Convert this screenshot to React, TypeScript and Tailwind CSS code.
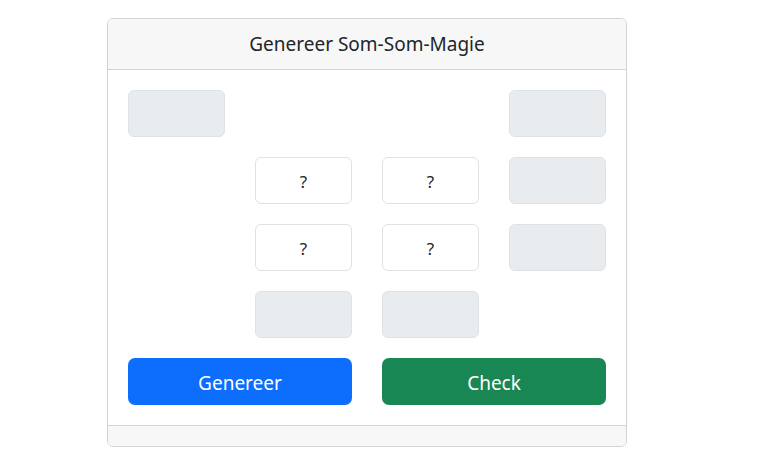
const cells: ("gray" | "q" | "empty")[][] = [
  ["gray", "empty", "empty", "gray"],
  ["empty", "q", "q", "gray"],
  ["empty", "q", "q", "gray"],
  ["empty", "gray", "gray", "empty"],
];

const Cell = ({ kind }: { kind: "gray" | "q" | "empty" }) => {
  if (kind === "empty") return <div className="h-[47px]" />;
  if (kind === "gray")
    return <div className="h-[47px] rounded-[6px] border border-[#dee2e6] bg-[#e9ecef]" />;
  return (
    <div className="h-[47px] rounded-[6px] border border-[#dee2e6] bg-white flex items-center justify-center pt-[2px] text-[17px] text-[#212529]">
      ?
    </div>
  );
};

const App = () => {
  return (
    <div className="w-[761px] h-[460px] bg-white font-['Noto_Sans',sans-serif] pt-[18px] pl-[107px]">
      <div className="w-[520px] rounded-[6px] border border-[#d3d3d3] overflow-hidden">
        {/* header */}
        <div className="h-[51px] bg-[#f7f7f7] border-b border-[#d3d3d3] flex items-center justify-center text-[19px] text-[#212529]">
          Genereer Som-Som-Magie
        </div>
        {/* body */}
        <div className="bg-white p-5">
          <div className="grid grid-cols-4 gap-x-[30px] gap-y-5">
            {cells.flat().map((kind, i) => (
              <Cell key={i} kind={kind} />
            ))}
            <button className="col-span-2 h-[47px] rounded-[7px] bg-[#0d6efd] text-white text-[19px] pt-[3px]">
              Genereer
            </button>
            <button className="col-span-2 h-[47px] rounded-[7px] bg-[#198754] text-white text-[19px] pt-[3px]">
              Check
            </button>
          </div>
        </div>
        {/* footer */}
        <div className="h-[21px] bg-[#f7f7f7] border-t border-[#d3d3d3]" />
      </div>
    </div>
  );
};

export default App;
